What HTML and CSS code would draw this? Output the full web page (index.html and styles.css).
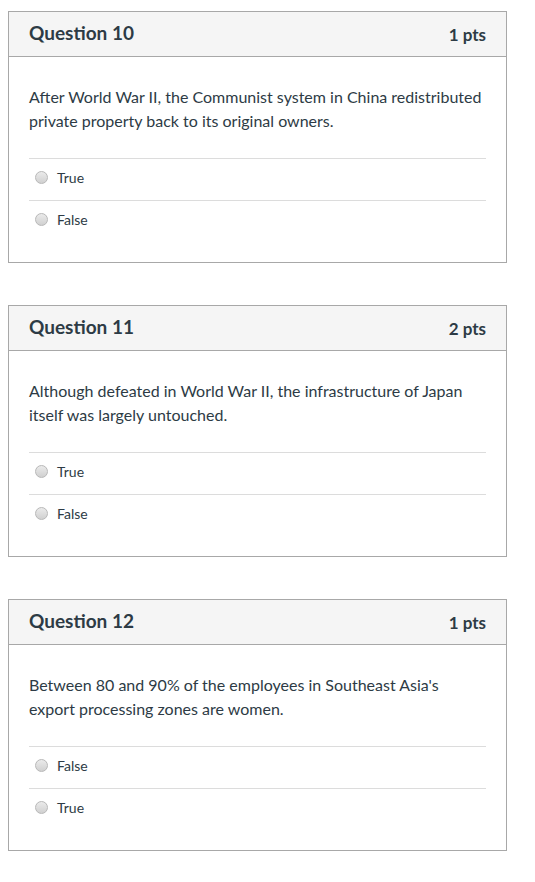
FILE: index.html
```html
<!DOCTYPE html>
<html>
<head>
<meta charset="utf-8">
<link rel="stylesheet" href="styles.css">
</head>
<body>
<div class="quiz">
  <div class="card">
    <div class="head"><span class="title">Question 10</span><span class="pts">1 pts</span></div>
    <div class="body">
      <p class="text">After World War II, the Communist system in China redistributed private property back to its original owners.</p>
      <div class="answers">
        <div class="opt"><span class="radio"></span><span>True</span></div>
        <div class="opt"><span class="radio"></span><span>False</span></div>
      </div>
    </div>
  </div>
  <div class="card">
    <div class="head"><span class="title">Question 11</span><span class="pts">2 pts</span></div>
    <div class="body">
      <p class="text">Although defeated in World War II, the infrastructure of Japan itself was largely untouched.</p>
      <div class="answers">
        <div class="opt"><span class="radio"></span><span>True</span></div>
        <div class="opt"><span class="radio"></span><span>False</span></div>
      </div>
    </div>
  </div>
  <div class="card">
    <div class="head"><span class="title">Question 12</span><span class="pts">1 pts</span></div>
    <div class="body">
      <p class="text">Between 80 and 90% of the employees in Southeast Asia's export processing zones are women.</p>
      <div class="answers">
        <div class="opt"><span class="radio"></span><span>False</span></div>
        <div class="opt"><span class="radio"></span><span>True</span></div>
      </div>
    </div>
  </div>
</div>
</body>
</html>
```
FILE: styles.css
```css
* { box-sizing: border-box; }
body {
  margin: 0;
  padding: 11px 0 0 8px;
  font-family: Lato, "Open Sans", sans-serif;
  color: #2d3b45;
  background: #fff;
}
.quiz {
  width: 499px;
  display: flex;
  flex-direction: column;
  gap: 42px;
}
.card {
  border: 1px solid #a8a8a8;
  background: #fff;
}
.head {
  height: 45px;
  background: #f5f5f5;
  border-bottom: 1px solid #a8a8a8;
  display: flex;
  align-items: center;
  justify-content: space-between;
  padding: 0 20px 3px 20px;
}
.title {
  font-size: 19px;
  font-weight: 700;
}
.pts {
  font-size: 17px;
  font-weight: 700;
  padding-top: 3px;
}
.body {
  padding: 28px 20px 20px 20px;
}
.text {
  margin: 0;
  font-size: 16px;
  line-height: 24px;
}
.answers {
  margin-top: 25px;
  border-top: 1px solid #dcdcdc;
}
.opt {
  height: 41px;
  display: flex;
  align-items: center;
  font-size: 14px;
  padding-left: 6px;
  padding-bottom: 5px;
}
.opt + .opt {
  height: 42px;
  border-top: 1px solid #dcdcdc;
}
.radio {
  width: 13px;
  height: 13px;
  border-radius: 50%;
  border: 1px solid #b8b8b8;
  background: linear-gradient(#ebebeb, #d0d0d0);
  margin-right: 9px;
  flex: none;
}
```
